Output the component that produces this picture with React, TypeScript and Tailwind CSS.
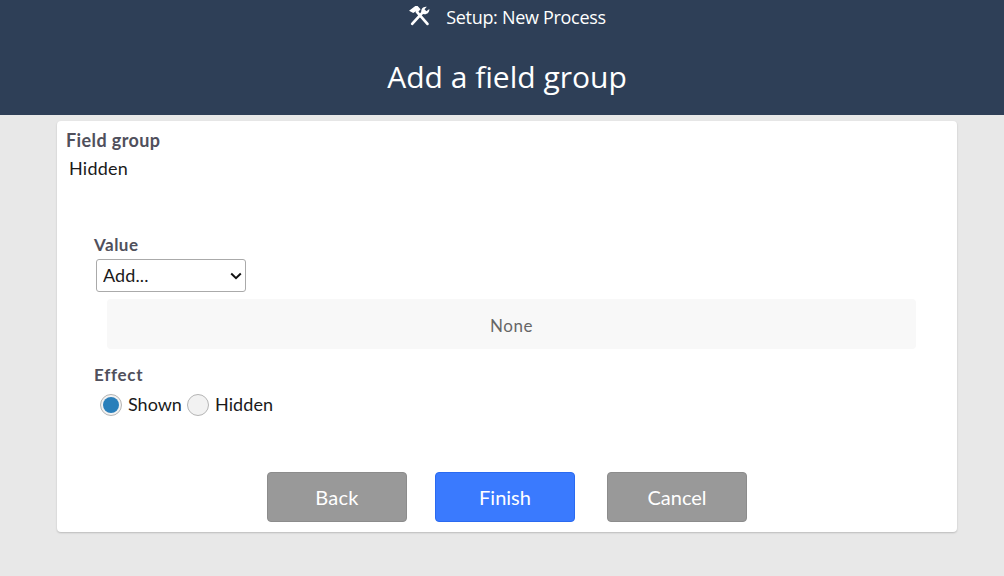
const bodyFont = "font-['Lato',sans-serif]";

function ToolsIcon() {
  return (
    <svg viewBox="0 0 22 22" className="w-[23px] h-[23px] mr-[15px] -mt-[4px]" fill="none">
      {/* wrench */}
      <path d="M4 19 L14.5 7.5" stroke="white" strokeWidth="2.6" strokeLinecap="round" />
      <path d="M13 8.5 C11.8 5 14.5 2 18 2.6 L15.8 5 L17.6 7 L20.4 4.8 C20.8 8.2 17.6 10.6 14.6 9.6 Z" fill="white" />
      {/* hammer */}
      <path d="M18.6 19 L8.5 7.6" stroke="white" strokeWidth="2.6" strokeLinecap="round" />
      <path d="M1 6.4 L7 1.8 L9.2 2 L12 5 L9 8.4 L7.6 7 L5 8.6 Z" fill="white" />
    </svg>
  );
}

export default function App() {
  return (
    <div className={`min-h-[576px] bg-[#e8e8e8] ${bodyFont}`}>
      {/* Header */}
      <header className="h-[115px] bg-[#2e3f57] text-white font-['Open_Sans',sans-serif] text-center pl-[10px]">
        <div className="h-[35px] flex items-center justify-center">
          <ToolsIcon />
          <span className="text-[18px] tracking-[-0.3px]">Setup: New Process</span>
        </div>
        <h1 className="mt-[6px] text-[30px] leading-[72px] h-[72px]">Add a field group</h1>
      </header>

      {/* Card */}
      <main className="mx-[57px] mt-[6px] w-[900px] h-[411px] bg-white rounded-[4px] shadow-[0_1px_2px_rgba(0,0,0,0.2)] pt-[7px] flex flex-col">
        <div className="pl-[9px]">
          <div className="text-[18px] leading-[24px] font-bold tracking-[0.4px] text-[#50505c]">Field group</div>
          <div className="text-[18px] leading-[24px] mt-[4px] ml-[3px] tracking-[0.25px] text-[#1a1a1a]">Hidden</div>
        </div>

        <div className="pl-[37px] mt-[53px]">
          <div className="text-[17px] leading-[24px] font-bold tracking-[0.5px] text-[#50505c]">Value</div>
          <div className="relative ml-[2px] mt-[2px] w-[150px] h-[33px]">
            <select className="block w-full h-full appearance-none pl-[6px] bg-white border border-[#aaaaaa] rounded-[3px] text-[18px] tracking-[0.1px] text-[#1a1a1a]">
              <option>Add...</option>
            </select>
            <svg viewBox="0 0 12 8" className="absolute right-[4px] top-[13px] w-[12px] h-[8px] pointer-events-none" fill="none">
              <path d="M1.2 1.5 L6 6.2 L10.8 1.5" stroke="#111111" strokeWidth="2" />
            </svg>
          </div>
        </div>

        <div className="ml-[50px] mr-[41px] mt-[7px] h-[50px] bg-[#f8f8f8] rounded-[4px] flex items-center justify-center pt-[4px] text-[17px] tracking-[0.5px] text-[#666666]">
          None
        </div>

        <div className="pl-[37px] mt-[14px]">
          <div className="text-[17px] leading-[24px] font-bold tracking-[0.7px] text-[#50505c]">Effect</div>
          <div className="flex items-center mt-[4px] ml-[6px] text-[18px] text-[#1a1a1a]">
            <span className="w-[22px] h-[22px] rounded-full border border-[#b5b5b5] bg-[#f2f2f2] flex items-center justify-center">
              <span className="w-[16px] h-[16px] rounded-full bg-[#2a7fba]" />
            </span>
            <span className="ml-[6px]">Shown</span>
            <span className="ml-[5px] w-[22px] h-[22px] rounded-full border border-[#b5b5b5] bg-[#f2f2f2]" />
            <span className="ml-[6px] tracking-[0.1px]">Hidden</span>
          </div>
        </div>

        <div className="mt-[54px] flex justify-center gap-[28px] text-[20px] text-white">
          <button className="w-[140px] h-[50px] rounded-[4px] bg-[#999999] border border-[#8c8c8c] tracking-[0.3px]">Back</button>
          <button className="w-[140px] h-[50px] rounded-[4px] bg-[#3a7afe] border border-[#2a6af0]">Finish</button>
          <button className="w-[140px] h-[50px] ml-[4px] rounded-[4px] bg-[#999999] border border-[#8c8c8c]">Cancel</button>
        </div>
      </main>
    </div>
  );
}
